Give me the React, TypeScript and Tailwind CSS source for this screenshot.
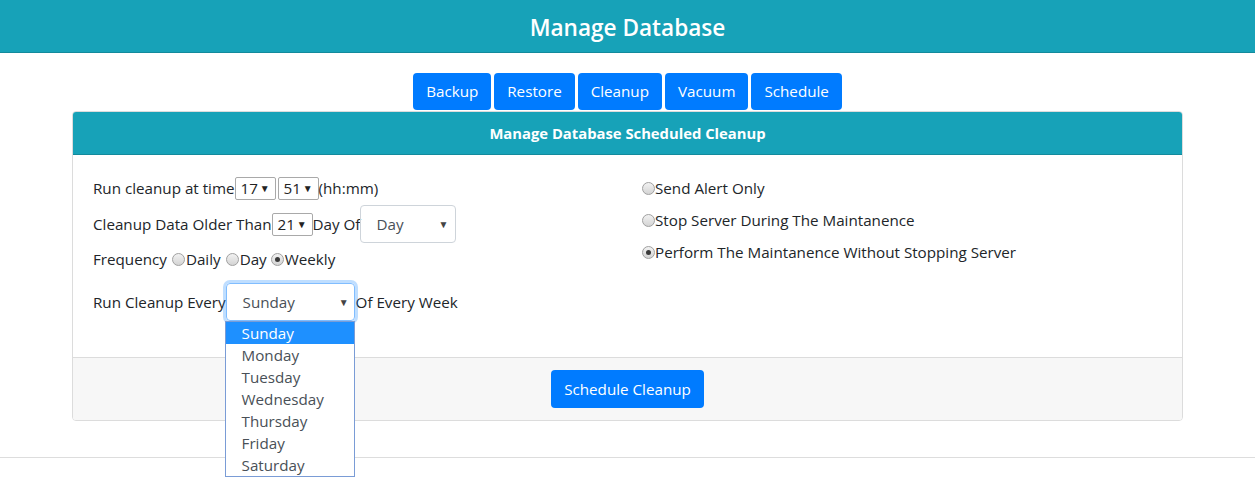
import React from "react";

const font = { fontFamily: '"Open Sans", "Noto Sans", sans-serif' };

function Radio({ checked = false }: { checked?: boolean }) {
  return (
    <span className="inline-flex h-[13px] w-[13px] shrink-0 items-center justify-center rounded-full border border-[#a0a0a0] bg-gradient-to-b from-[#f2f2f2] to-[#d4d4d4]">
      {checked && <span className="h-[5px] w-[5px] rounded-full bg-[#3a3a3a]" />}
    </span>
  );
}

function SmallSelect({ value }: { value: string }) {
  return (
    <span className="inline-flex h-[23px] w-[41px] items-center justify-between rounded-[2px] border border-[#a9a9a9] bg-white pl-[5px] pr-[5px] text-[#222]">
      <span>{value}</span>
      <span className="text-[10px] leading-none">▼</span>
    </span>
  );
}

const days = ["Sunday", "Monday", "Tuesday", "Wednesday", "Thursday", "Friday", "Saturday"];

export default function App() {
  return (
    <div className="min-h-[481px] bg-white text-[15.2px] text-[#212529]" style={font}>
      <div className="flex h-[53px] items-center justify-center border-b border-[#138a9c] bg-[#17a2b8] pt-[3px]">
        <h1 className="text-[22.6px] font-semibold text-white">Manage Database</h1>
      </div>

      <div className="mt-[20px] flex justify-center gap-[3px]">
        {["Backup", "Restore", "Cleanup", "Vacuum", "Schedule"].map((b) => (
          <button
            key={b}
            className="h-[37px] rounded-[4px] bg-[#007bff] px-[13px] text-[15.2px] text-white"
          >
            {b}
          </button>
        ))}
      </div>

      <div className="relative mx-[72px] mt-[1px] rounded-[4px] border border-[#dcdcdc]">
        <div className="flex h-[43px] items-center justify-center rounded-t-[3px] border-b border-[#138a9c] bg-[#17a2b8] text-[14.8px] font-bold text-white">
          Manage Database Scheduled Cleanup
        </div>

        <div className="flex px-[20px] pb-[36px] pt-[21px]">
          <div className="w-[534px] shrink-0">
            <div className="flex h-[24px] items-center">
              <span>Run cleanup at time</span>
              <SmallSelect value="17" />
              <span className="ml-[2px]" />
              <SmallSelect value="51" />
              <span>(hh:mm)</span>
            </div>
            <div className="mt-[5px] flex h-[38px] items-center">
              <span>Cleanup Data Older Than</span>
              <SmallSelect value="21" />
              <span>Day Of</span>
              <span className="flex h-[38px] w-[96px] items-center justify-between rounded-[4px] border border-[#ced4da] pl-[15px] pr-[7px] text-[#495057]">
                <span>Day</span>
                <span className="text-[10px] leading-none text-[#444]">▼</span>
              </span>
            </div>
            <div className="mt-[4px] flex h-[24px] items-center">
              <span>Frequency</span>
              <span className="ml-[5px] mr-[1px] flex">
                <Radio />
              </span>
              <span>Daily</span>
              <span className="ml-[5px] mr-[1px] flex">
                <Radio />
              </span>
              <span>Day</span>
              <span className="ml-[4px] mr-[1px] flex">
                <Radio checked />
              </span>
              <span>Weekly</span>
            </div>
            <div className="mt-[12px] flex h-[38px] items-center">
              <span>Run Cleanup Every</span>
              <span className="relative">
                <span className="flex h-[38px] w-[129px] items-center justify-between rounded-[4px] border border-[#80bdff] pl-[16px] pr-[5px] text-[#495057] shadow-[0_0_0_3px_rgba(0,123,255,0.25)]">
                  <span>Sunday</span>
                  <span className="text-[10px] leading-none text-[#444]">▼</span>
                </span>
                <div className="absolute left-[-1px] top-[38px] z-10 w-[130px] border border-[#7a9cd6] bg-white">
                  {days.map((d, i) => (
                    <div
                      key={d}
                      className={`h-[22px] pl-[16px] leading-[22px] ${
                        i === 0 ? "bg-[#1e90ff] text-white" : "text-[#495057]"
                      }`}
                    >
                      {d}
                    </div>
                  ))}
                </div>
              </span>
              <span className="ml-[1px]">Of Every Week</span>
            </div>
          </div>

          <div className="pl-[15px]">
            <div className="flex h-[24px] items-center">
              <Radio />
              <span>Send Alert Only</span>
            </div>
            <div className="mt-[8px] flex h-[24px] items-center">
              <Radio />
              <span>Stop Server During The Maintanence</span>
            </div>
            <div className="mt-[8px] flex h-[24px] items-center">
              <Radio checked />
              <span>Perform The Maintanence Without Stopping Server</span>
            </div>
          </div>
        </div>

        <div className="flex justify-center rounded-b-[3px] border-t border-[#dcdcdc] bg-[#f7f7f7] py-[12px]">
          <button className="h-[38px] rounded-[4px] bg-[#007bff] px-[13px] text-[15.2px] text-white">
            Schedule Cleanup
          </button>
        </div>
      </div>

      <hr className="mt-[36px] border-t border-[#dddddd]" />
    </div>
  );
}
